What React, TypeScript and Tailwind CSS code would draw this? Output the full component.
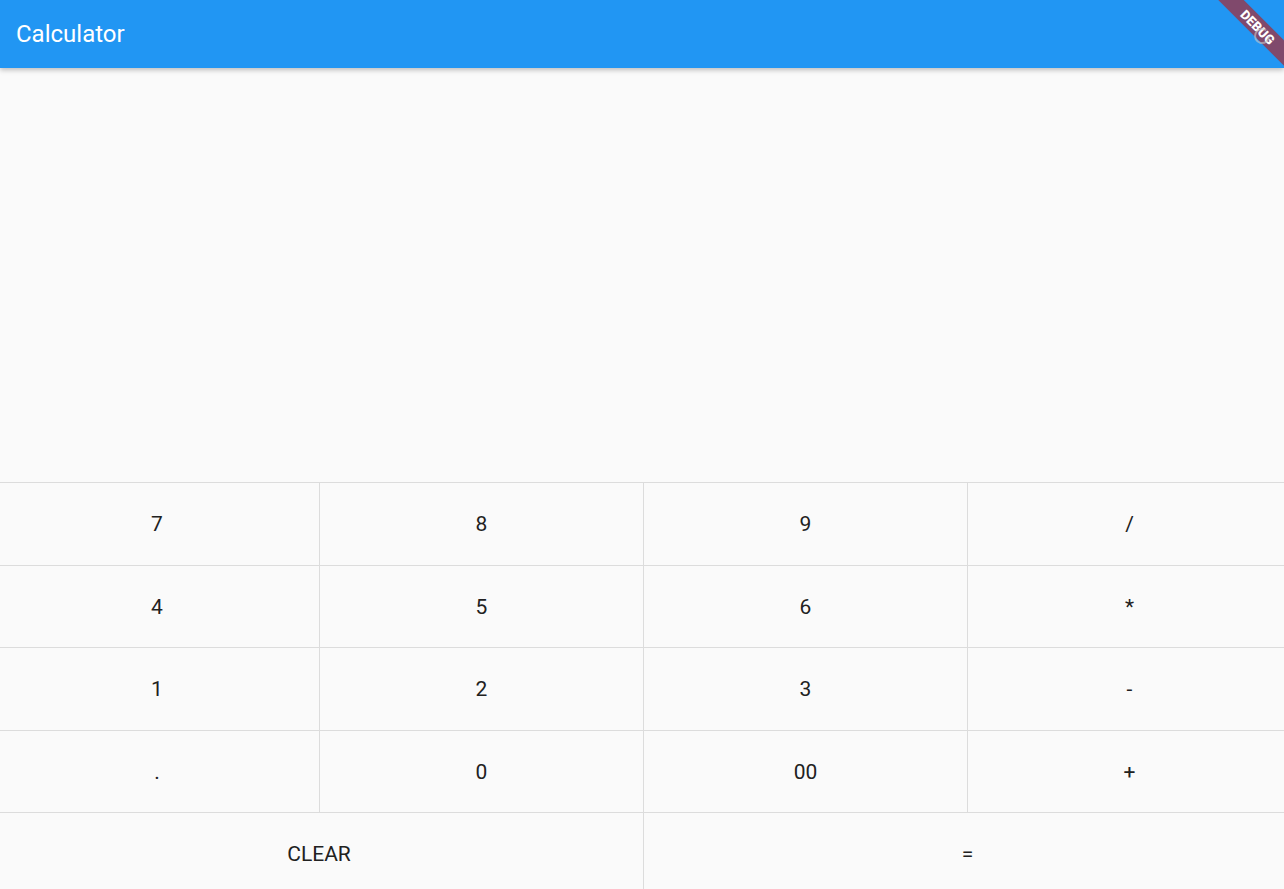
import React from "react";

const rows = [
  ["7", "8", "9", "/"],
  ["4", "5", "6", "*"],
  ["1", "2", "3", "-"],
  [".", "0", "00", "+"],
];

function Key({ label, wide, first }: { label: string; wide?: boolean; first?: boolean }) {
  return (
    <div
      className={`${wide ? "w-[648px]" : "w-[324px]"} ${
        first ? "" : "border-l border-[#dcdcdc]"
      } flex items-center justify-center pt-[2px] text-[21px] text-[#212121] leading-none`}
    >
      {label}
    </div>
  );
}

function DebugBanner() {
  return (
    <div className="absolute top-0 right-0 w-[84px] h-[80px] overflow-hidden pointer-events-none">
      <div className="absolute left-[-3px] top-[18px] w-[122px] h-[18px] rotate-45 bg-[rgba(183,28,28,0.63)] flex items-center justify-center">
        <span className="text-[13px] font-black text-white leading-none tracking-[0.2px]">DEBUG</span>
      </div>
      <svg className="absolute left-[52px] top-[26px] opacity-60" width="20" height="20" viewBox="0 0 20 20">
        <path d="M17 10a7 7 0 1 1-3-5.7" fill="none" stroke="#c9c9c9" strokeWidth="2" />
      </svg>
    </div>
  );
}

export default function App() {
  return (
    <div
      className="h-[889px] w-full overflow-hidden bg-[#fafafa] flex flex-col"
      style={{ fontFamily: "Roboto, 'Liberation Sans', sans-serif" }}
    >
      <header className="relative z-10 h-[68px] shrink-0 bg-[#2196f3] flex items-center pl-[16px] shadow-[0_2px_5px_rgba(0,0,0,0.25)]">
        <h1 className="text-[24px] text-white font-normal">Calculator</h1>
        <DebugBanner />
      </header>

      <div className="h-[414px] shrink-0" />

      <div className="flex flex-col">
        {rows.map((row, i) => (
          <div key={i} className="h-[82.5px] shrink-0 border-t border-[#dcdcdc] flex ml-[-5px] w-[1296px]">
            {row.map((label, j) => (
              <Key key={label} label={label} first={j === 0} />
            ))}
          </div>
        ))}
        <div className="h-[82.5px] shrink-0 border-t border-[#dcdcdc] flex ml-[-5px] w-[1296px]">
          <Key label="CLEAR" wide first />
          <Key label="=" wide />
        </div>
      </div>
    </div>
  );
}
